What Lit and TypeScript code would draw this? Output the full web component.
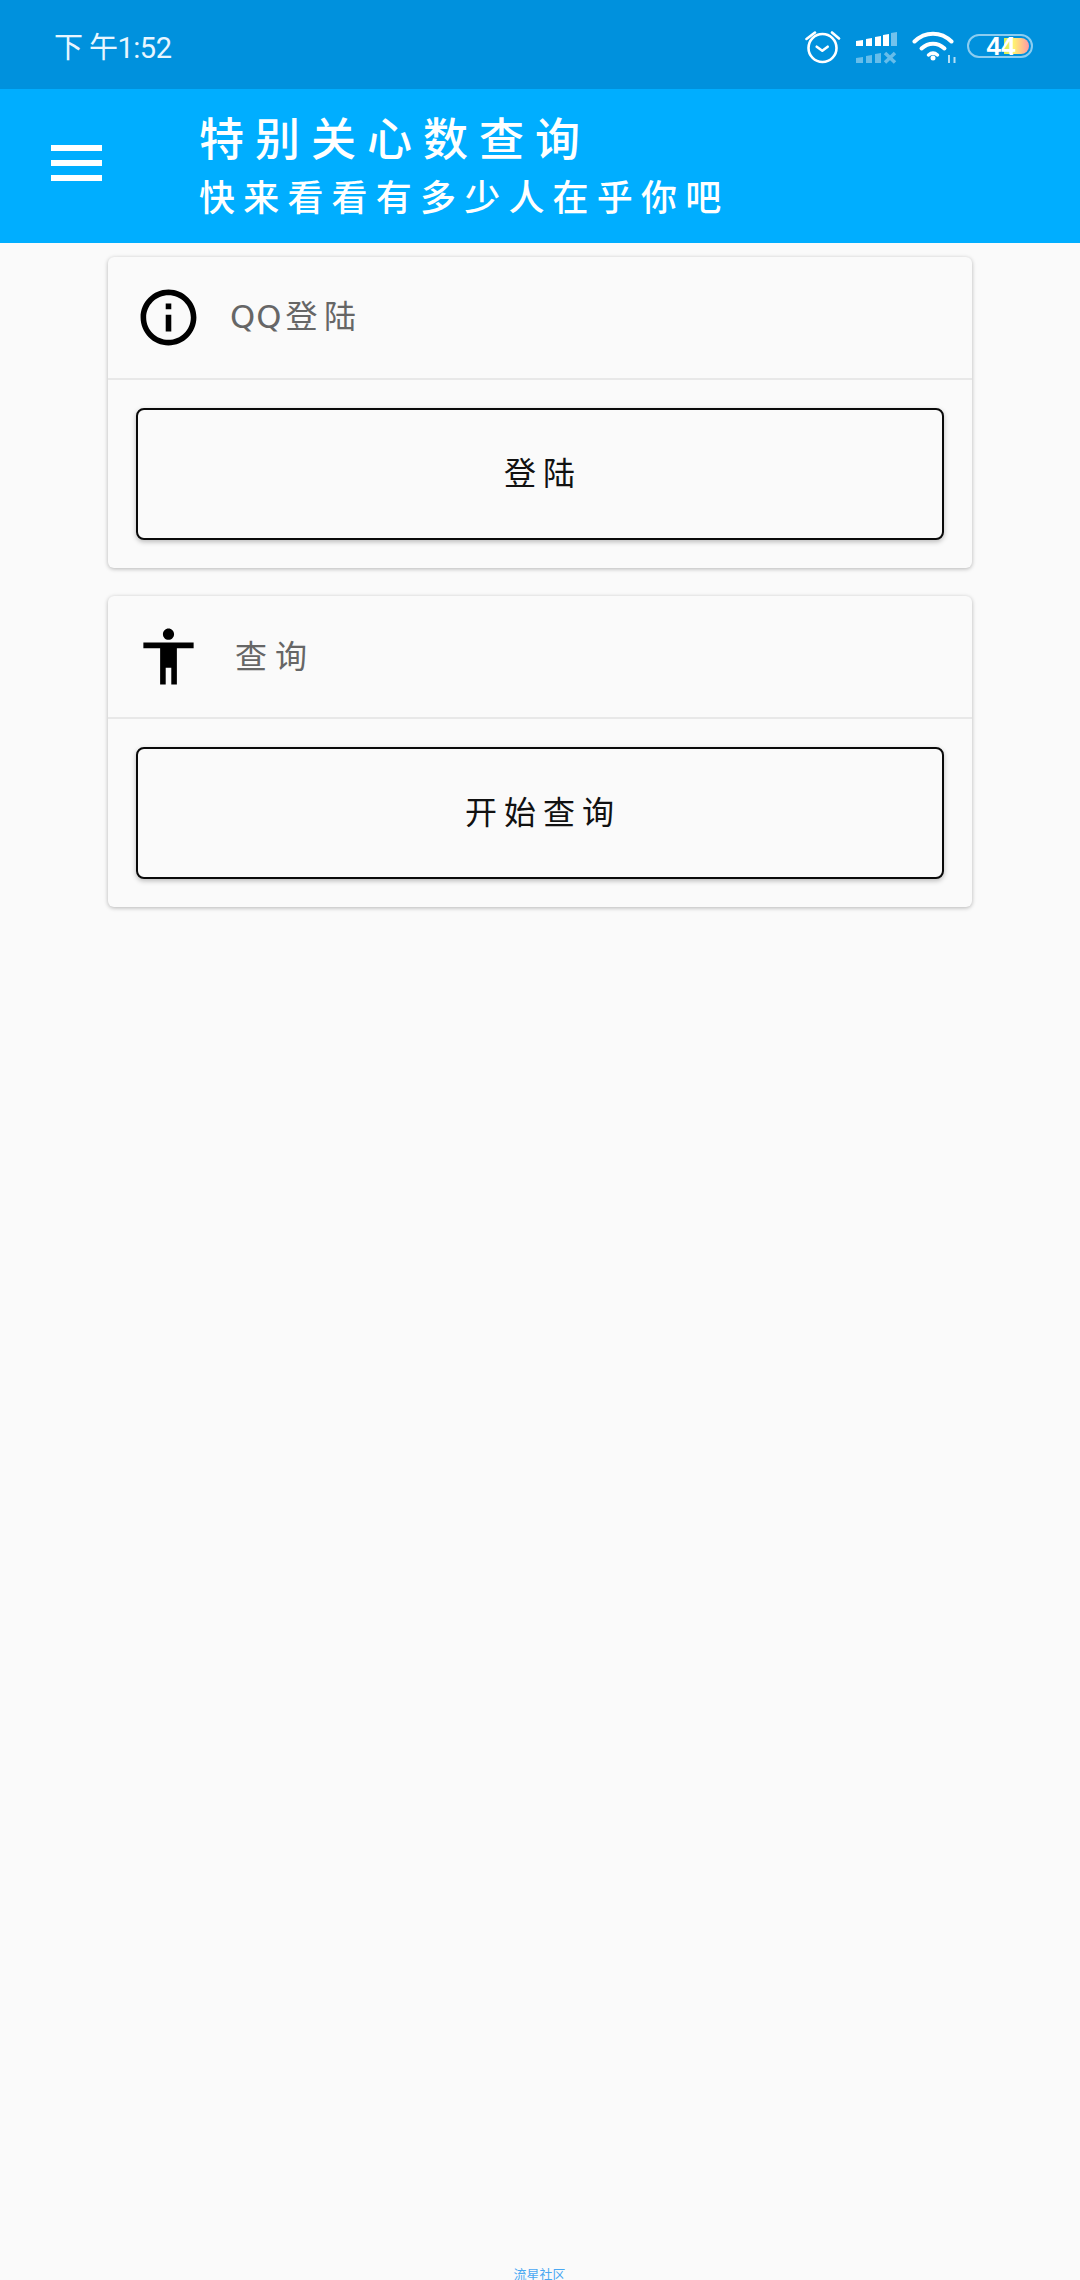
import { LitElement, html, css, svg } from "lit";
import { customElement } from "lit/decorators.js";

const infoIcon = svg`<path d="M11 7h2v2h-2zm0 4h2v6h-2zm1-9C6.48 2 2 6.48 2 12s4.48 10 10 10 10-4.48 10-10S17.52 2 12 2zm0 18c-4.41 0-8-3.59-8-8s3.59-8 8-8 8 3.59 8 8-3.59 8-8 8z"/>`;
const personIcon = svg`<path d="M12 2c1.1 0 2 .9 2 2s-.9 2-2 2-2-.9-2-2 .9-2 2-2zm9 7h-6v13h-2v-6h-2v6H9V9H3V7h18v2z"/>`;

@customElement("app-root")
export class AppRoot extends LitElement {
  static styles = css`
    :host {
      display: flex;
      flex-direction: column;
      width: 1080px;
      height: 2280px;
      overflow: hidden;
      background: #fafafa;
      font-family: "Noto Sans CJK SC", "Noto Sans", sans-serif;
    }
    .status {
      height: 89px;
      box-sizing: border-box;
      flex: none;
      background: #0091dd;
      display: flex;
      align-items: center;
      color: #fff;
      padding: 7px 47px 0 54px;
    }
    .time {
      font-size: 29px;
      line-height: 1;
      color: #e8f6ff;
      font-family: "Roboto", "Noto Sans CJK SC", sans-serif;
      flex: 1;
      letter-spacing: -0.5px;
    }
    .time .gap { letter-spacing: 6px; }
    .sicons { display: flex; align-items: center; }
    .alarm { width: 36px; height: 36px; margin-right: 15px; }
    .signal { width: 42px; height: 32px; margin-right: 14px; }
    .wifi { width: 44px; height: 34px; margin-right: 11px; }
    .battery {
      position: relative;
      width: 66px;
      height: 24px;
      box-sizing: border-box;
      border: 2px solid rgba(255, 255, 255, 0.55);
      border-radius: 12px;
      display: flex;
      align-items: center;
      justify-content: center;
      margin-bottom: 4px;
    }
    .battery .fill {
      position: absolute;
      left: 35px;
      top: 2px;
      bottom: 2px;
      width: 25px;
      border-radius: 0 8px 8px 0;
      background: linear-gradient(90deg, #d6ee55, #fff070 40%, #ff9aa6);
    }
    .battery .num {
      position: relative;
      font: bold 26px/1 "Liberation Sans", sans-serif;
      color: #fff;
      margin-left: 2px;
    }
    .bar {
      height: 154px;
      flex: none;
      background: #00aeff;
      display: flex;
      align-items: center;
      color: #fff;
    }
    .menu {
      margin-left: 51px;
      width: 51px;
      display: flex;
      flex-direction: column;
      gap: 9px;
      margin-bottom: 6px;
    }
    .menu span { height: 6px; background: #fff; display: block; }
    .titles { margin-left: 97px; display: flex; flex-direction: column; gap: 4px; margin-top: -4px; }
    .t1 { font-size: 45px; line-height: 57px; letter-spacing: 11px; font-weight: 500; }
    .t2 { font-size: 36px; line-height: 52px; letter-spacing: 8.2px; font-weight: 500; }
    main {
      flex: 1;
      display: flex;
      flex-direction: column;
      gap: 28px;
      padding: 14px 108px 0;
    }
    .card {
      height: 311px;
      box-sizing: border-box;
      background: #fafafa;
      border-radius: 6px;
      box-shadow: 0 1px 4px rgba(0, 0, 0, 0.28);
      display: flex;
      flex-direction: column;
    }
    .head {
      height: 123px;
      box-sizing: border-box;
      flex: none;
      border-bottom: 2px solid #e8e8e8;
      display: flex;
      align-items: center;
      padding-left: 27px;
      gap: 28px;
    }
    .head svg { width: 67px; height: 67px; fill: #000; flex: none; }
    .head .label { font-size: 32px; letter-spacing: 6.5px; color: #666; line-height: 1; margin-bottom: 5px; }
    .head .label .latin { font-family: "DejaVu Sans", sans-serif; letter-spacing: 1px; font-size: 32px; margin-right: 3px; }
    .head .label.wide { letter-spacing: 8px; margin-left: 5px; }
    .body { flex: 1; padding: 28px; display: flex; }
    .btn {
      flex: 1;
      height: 132px;
      box-sizing: border-box;
      border: 2px solid #0a0a0a;
      border-radius: 8px;
      background: #fafafa;
      box-shadow: 0 2px 5px rgba(0, 0, 0, 0.25);
      font: inherit;
      font-size: 32px;
      letter-spacing: 7px;
      color: #111;
      display: flex;
      align-items: center;
      justify-content: center;
      padding: 0 0 7px 6px;
    }
    footer {
      flex: none;
      height: 12px;
      text-align: center;
      font-size: 13px;
      line-height: 12px;
      color: #4aa8f2;
      padding-right: 1px;
    }
  `;

  card(icon: unknown, label: unknown, wide: boolean, action: string) {
    return html`<section class="card">
      <div class="head">
        <svg viewBox="0 0 24 24">${icon}</svg>
        <span class="label ${wide ? "wide" : ""}">${label}</span>
      </div>
      <div class="body"><div class="btn">${action}</div></div>
    </section>`;
  }

  render() {
    return html`
      <div class="status">
        <span class="time"><span class="gap">下</span>午1:52</span>
        <div class="sicons">
          <svg class="alarm" viewBox="0 0 36 36" fill="none" stroke="#fff" stroke-width="2.6" stroke-linecap="round" stroke-linejoin="round">
            <circle cx="17.500" cy="18" r="14"/>
            <path d="M11.700 16.700 17.300 20.700l5.400-4"/>
            <path d="M1.500 9 10 2.500M34 8.500 27 2.500"/>
          </svg>
          <svg class="signal" viewBox="0 0 42 32" fill="#fff">
            <path d="M0 9l7-1v6H0zM10 7l6-1v8h-6zM19 5l6-1v10h-6zM27 3l6-1v12h-6z"/>
            <path d="M35 1l6-1v14h-6z" opacity=".45"/>
            <g opacity=".4">
              <path d="M0 26l7-1v6H0zM10 24l6-1v8h-6zM19 22l6-1v10h-6z"/>
              <path d="M29 21l10 9.500M39 21l-10 9.500" stroke="#fff" stroke-width="3.500" fill="none"/>
            </g>
          </svg>
          <svg class="wifi" viewBox="0 0 44 34" fill="none" stroke="#fff" stroke-width="4" stroke-linecap="round">
            <path d="M2.500 10.500C13 0 29 0 39.500 10.500"/>
            <path d="M9.500 17.500c7-6.500 16-6.500 23 0"/>
            <path d="M16.500 24c3-2.500 6-2.500 9 0" stroke-width="3.500"/>
            <circle cx="21" cy="27" r="2.500" fill="#fff" stroke="none"/>
            <path d="M37 24v8M42.500 26v6" stroke-width="2" opacity=".7" stroke-linecap="butt"/>
          </svg>
          <div class="battery"><span class="fill"></span><span class="num">44</span></div>
        </div>
      </div>
      <div class="bar">
        <div class="menu"><span></span><span></span><span></span></div>
        <div class="titles">
          <span class="t1">特别关心数查询</span>
          <span class="t2">快来看看有多少人在乎你吧</span>
        </div>
      </div>
      <main>
        ${this.card(infoIcon, html`<span class="latin">QQ</span>登陆`, false, "登陆")}
        ${this.card(personIcon, "查询", true, "开始查询")}
      </main>
      <footer>流星社区</footer>
    `;
  }
}
